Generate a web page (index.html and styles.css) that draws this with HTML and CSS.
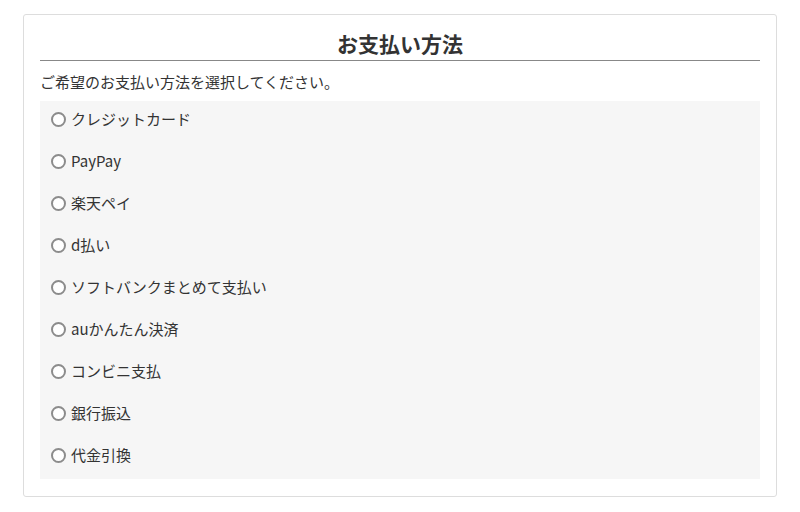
FILE: index.html
```html
<!DOCTYPE html>
<html lang="ja">
<head>
<meta charset="utf-8">
<link rel="stylesheet" href="styles.css">
</head>
<body>
<div class="card">
  <h2 class="title">お支払い方法</h2>
  <p class="lead">ご希望のお支払い方法を選択してください。</p>
  <ul class="options">
    <li class="option"><span class="radio"></span><span class="label">クレジットカード</span></li>
    <li class="option"><span class="radio"></span><span class="label">PayPay</span></li>
    <li class="option"><span class="radio"></span><span class="label">楽天ペイ</span></li>
    <li class="option"><span class="radio"></span><span class="label">d払い</span></li>
    <li class="option"><span class="radio"></span><span class="label">ソフトバンクまとめて支払い</span></li>
    <li class="option"><span class="radio"></span><span class="label">auかんたん決済</span></li>
    <li class="option"><span class="radio"></span><span class="label">コンビニ支払</span></li>
    <li class="option"><span class="radio"></span><span class="label">銀行振込</span></li>
    <li class="option"><span class="radio"></span><span class="label">代金引換</span></li>
  </ul>
</div>
</body>
</html>
```
FILE: styles.css
```css
html, body {
  margin: 0;
  padding: 0;
  background: #fff;
}
body {
  font-family: "Noto Sans CJK JP", "Noto Sans", sans-serif;
  color: #333;
}
.card {
  margin: 14px 23px 0 23px;
  width: 754px;
  height: 483px;
  box-sizing: border-box;
  border: 1px solid #ddd;
  border-radius: 3px;
  padding: 13px 16px 16px 16px;
}
.title {
  margin: 0;
  font-size: 21px;
  font-weight: bold;
  line-height: 30px;
  text-align: center;
  padding-bottom: 2px;
  border-bottom: 1px solid #888;
  color: #333;
}
.lead {
  margin: 9px 0 7px 0;
  font-size: 15px;
  line-height: 24px;
}
.options {
  list-style: none;
  margin: 0;
  padding: 6px 11px 12px 11px;
  background: #f6f6f6;
  display: flex;
  flex-direction: column;
  gap: 18px;
}
.option {
  display: flex;
  align-items: center;
  gap: 5px;
  height: 24px;
  font-size: 15px;
  line-height: 24px;
}
.radio {
  width: 15px;
  height: 15px;
  box-sizing: border-box;
  border: 2px solid #8c8c8c;
  border-radius: 50%;
  background: #fff;
  flex: none;
}
```
